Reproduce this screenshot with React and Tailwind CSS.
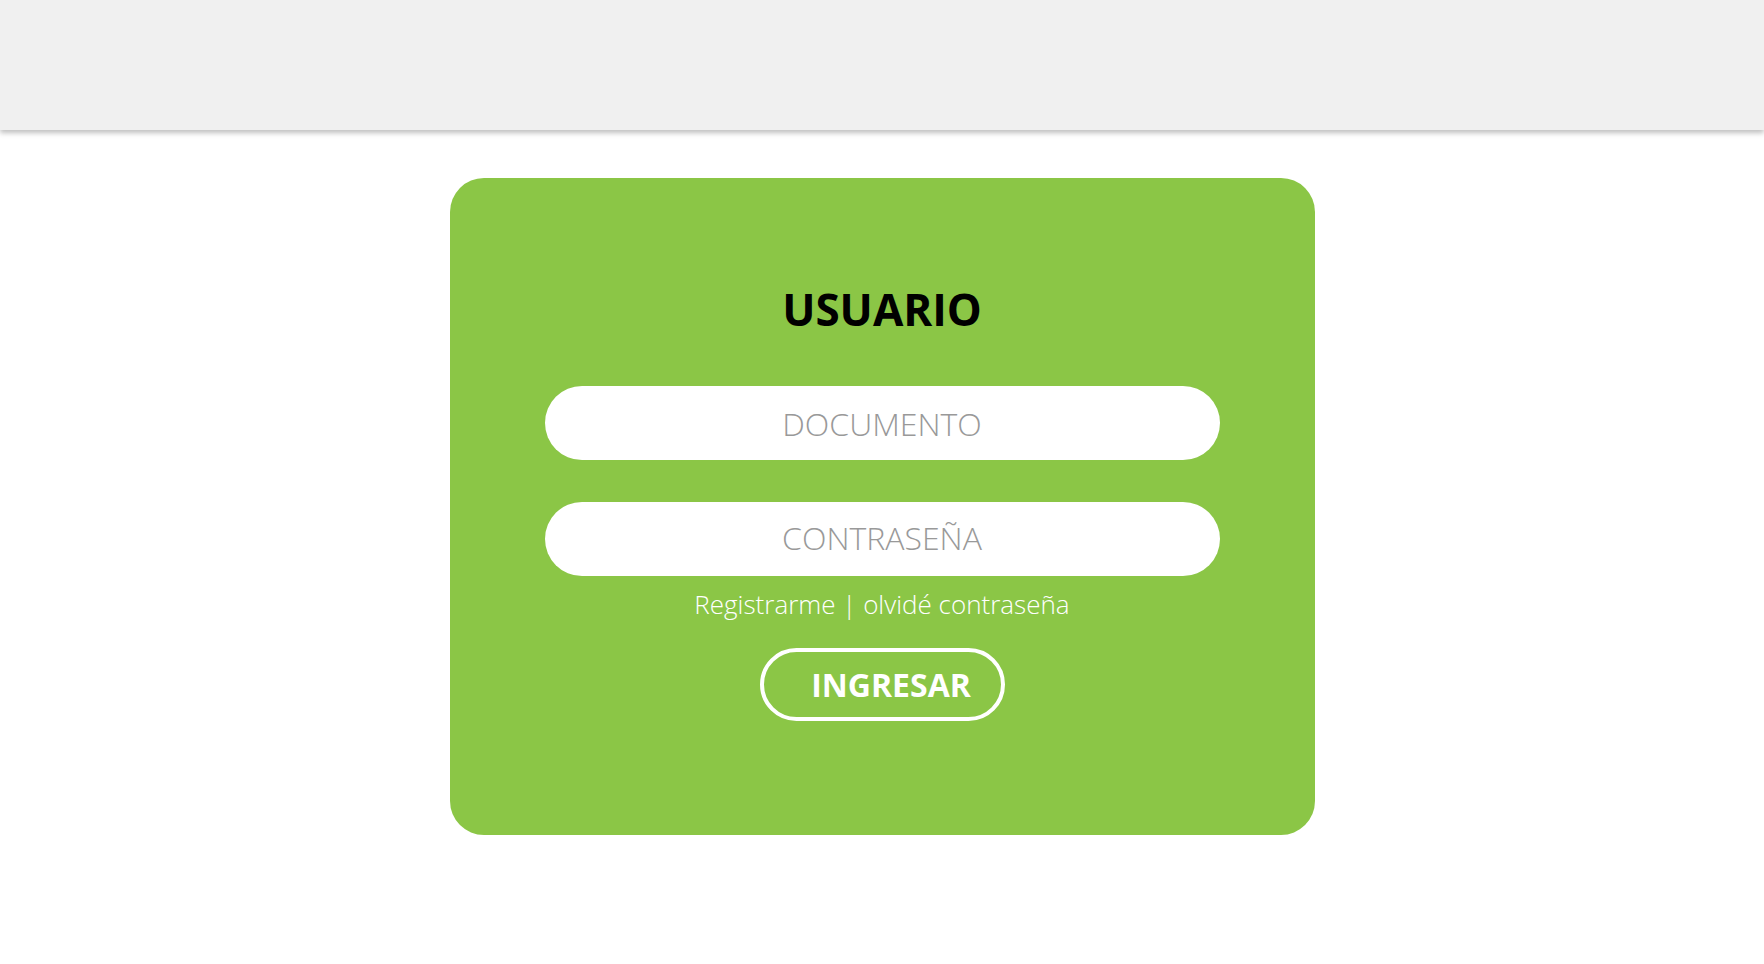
import { useState } from "react";

export default function App() {
  const [doc, setDoc] = useState("");
  const [pass, setPass] = useState("");

  return (
    <div className="min-h-screen bg-white font-['Open_Sans','Noto_Sans',sans-serif]">
      <header className="h-[130px] bg-[#f0f0f0] shadow-[0_3px_5px_rgba(0,0,0,0.25)]" />

      <main className="flex justify-center pt-[48px]">
        <form
          onSubmit={(e) => e.preventDefault()}
          className="flex h-[657px] w-[865px] flex-col items-center rounded-[34px] bg-[#8bc646] pt-[100px]"
        >
          <h1 className="text-[44px] font-bold leading-[63px] text-black">USUARIO</h1>

          <input
            value={doc}
            onChange={(e) => setDoc(e.target.value)}
            placeholder="DOCUMENTO"
            className="mt-[45px] h-[74px] w-[675px] rounded-full bg-white text-center text-[32px] leading-[44px] font-light text-[#555] outline-none placeholder:text-[#999]"
          />
          <input
            type="text"
            value={pass}
            onChange={(e) => setPass(e.target.value)}
            placeholder="CONTRASEÑA"
            className="mt-[42px] h-[74px] w-[675px] rounded-full bg-white pb-[4px] text-center text-[32px] leading-[44px] font-light text-[#555] outline-none placeholder:text-[#999]"
          />

          <div className="mt-[12px] text-[26px] font-light leading-[33px] text-white">
            <a href="#" className="hover:underline">Registrarme</a>
            {" | "}
            <a href="#" className="hover:underline">olvidé contraseña</a>
          </div>

          <button
            type="submit"
            className="mt-[27px] h-[73px] w-[245px] rounded-full border-[4px] border-white pl-[18px] text-[32px] font-bold text-white"
          >
            INGRESAR
          </button>
        </form>
      </main>
    </div>
  );
}
